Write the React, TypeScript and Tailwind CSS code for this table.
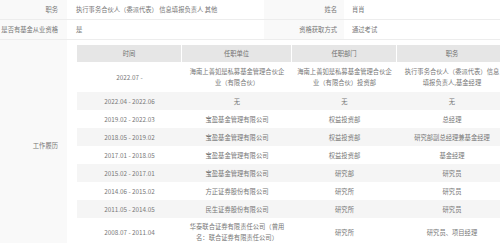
import React from "react";

const rows: { t: string; u: string; d: string; r: string }[] = [
  { t: "2022.07 -", u: "海南上善如是私募基金管理合伙企业（有限合伙）", d: "海南上善如是私募基金管理合伙企业（有限合伙）投资部", r: "执行事务合伙人（委派代表）信息填报负责人,基金经理" },
  { t: "2022.04 - 2022.06", u: "无", d: "无", r: "无" },
  { t: "2019.02 - 2022.03", u: "宝盈基金管理有限公司", d: "权益投资部", r: "总经理" },
  { t: "2018.05 - 2019.02", u: "宝盈基金管理有限公司", d: "权益投资部", r: "研究部副总经理兼基金经理" },
  { t: "2017.01 - 2018.05", u: "宝盈基金管理有限公司", d: "权益投资部", r: "基金经理" },
  { t: "2015.02 - 2017.01", u: "宝盈基金管理有限公司", d: "研究部", r: "研究员" },
  { t: "2014.06 - 2015.02", u: "方正证券股份有限公司", d: "研究所", r: "研究员" },
  { t: "2011.05 - 2014.05", u: "民生证券股份有限公司", d: "研究所", r: "研究员" },
  { t: "2008.07 - 2011.04", u: "华泰联合证券有限责任公司（曾用名：联合证券有限责任公司）", d: "研究所", r: "研究员、项目经理" },
];

export default function App() {
  return (
    <div
      className="w-[500px] h-[243px] overflow-hidden bg-white text-[#777777] text-[6.3px] leading-[11px]"
      style={{ fontFamily: '"Noto Sans CJK SC", "Noto Sans", sans-serif' }}
    >
      <div className="flex h-[20px] border-b border-[#ededed]">
        <div className="w-[67px] shrink-0 bg-[#f9f9f9] flex items-center justify-end pr-[9px]">职务</div>
        <div className="w-[197px] shrink-0 flex items-center pl-[9px] whitespace-nowrap">执行事务合伙人（委派代表） 信息填报负责人 其他</div>
        <div className="w-[80px] shrink-0 bg-[#f9f9f9] flex items-center justify-end pr-[7px]">姓名</div>
        <div className="flex-1 flex items-center pl-[8px]">肖肖</div>
      </div>
      <div className="flex h-[20px] border-b border-[#ededed]">
        <div className="w-[67px] shrink-0 bg-[#f9f9f9] flex items-center justify-end pr-[9px] whitespace-nowrap">是否有基金从业资格</div>
        <div className="w-[197px] shrink-0 flex items-center pl-[9px]">是</div>
        <div className="w-[80px] shrink-0 bg-[#f9f9f9] flex items-center justify-end pr-[7px]">资格获取方式</div>
        <div className="flex-1 flex items-center pl-[8px]">通过考试</div>
      </div>
      <div className="flex">
        <div className="w-[67px] shrink-0 bg-[#f9f9f9] flex items-center justify-end pr-[9px]">工作履历</div>
        <div className="flex-1 overflow-hidden pl-[10px] pt-[5px] pb-[5px]">
          <div className="w-[430px]">
            <div className="flex h-[17px] bg-[#e6e6e6] text-[#707070]">
              <div className="w-[105px] flex items-center justify-center border-r border-white">时间</div>
              <div className="w-[110px] flex items-center justify-center border-r border-white">任职单位</div>
              <div className="w-[105px] flex items-center justify-center border-r border-white">任职部门</div>
              <div className="w-[110px] flex items-center justify-center">职务</div>
            </div>
            {rows.map((row, i) => (
              <div key={i} className={`flex text-center ${i % 2 === 1 ? "bg-[#f5f5f5]" : "bg-white"} ${i === 0 ? "min-h-[30px]" : "min-h-[18px]"}`}>
                <div className="w-[105px] flex items-center justify-center px-[4px] py-[3px]">{row.t}</div>
                <div className="w-[110px] flex items-center justify-center px-[6px] py-[3px]">{row.u}</div>
                <div className="w-[105px] flex items-center justify-center px-[4px] py-[3px]">{row.d}</div>
                <div className="w-[110px] flex items-center justify-center px-[6px] py-[3px]">{row.r}</div>
              </div>
            ))}
          </div>
        </div>
      </div>
    </div>
  );
}
